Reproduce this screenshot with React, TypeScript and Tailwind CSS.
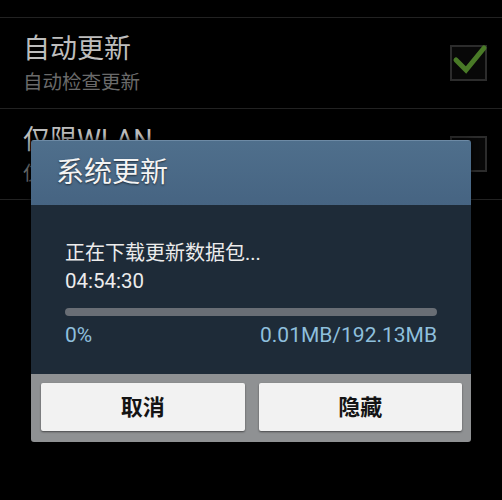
const FONT = "font-['Roboto','Noto_Sans_CJK_SC',sans-serif]";

const ROWS = [
  { title: "检查更新", sub: "检查更新", checked: false },
  { title: "自动更新", sub: "自动检查更新", checked: true },
  { title: "仅限WLAN", sub: "仅在WLAN下下载", checked: false },
];

function CheckBox({ checked }: { checked: boolean }) {
  return (
    <div className="relative h-[36px] w-[37px] border-2 border-[#2c2c2c] bg-[#080808]">
      {checked && (
        <svg
          className="absolute -right-[3px] -top-[4px]"
          width="38"
          height="34"
          viewBox="0 0 38 34"
          fill="none"
          stroke="#497a27"
          strokeWidth="5"
          strokeLinecap="round"
        >
          <path d="M6 17l10 10L34 5" />
        </svg>
      )}
    </div>
  );
}

export default function App() {
  return (
    <div className={`relative h-[500px] w-[502px] overflow-hidden bg-black ${FONT}`}>
      {/* settings list behind the dialog */}
      <div className="-mt-[73px] flex flex-col">
        {ROWS.map((row, i) => (
          <div
            key={i}
            className="flex h-[91px] items-center justify-between border-b border-[#222] pl-[23px] pr-[15px]"
          >
            <div className="flex flex-col">
              <span className="text-[27px] leading-[34px] text-[#bdbdbd]">{row.title}</span>
              <span className="mt-[6px] text-[19.5px] leading-[22px] text-[#6a6a6a]">{row.sub}</span>
            </div>
            <CheckBox checked={row.checked} />
          </div>
        ))}
      </div>

      {/* dialog */}
      <div className="absolute left-[31px] top-[140px] flex w-[440px] flex-col overflow-hidden rounded-[3px] shadow-[0_0_6px_rgba(0,0,0,0.8)]">
        <div className="flex h-[65px] items-center border-t border-[#6d8aa5] bg-gradient-to-b from-[#4f6f8c] to-[#466482] pl-[25px]">
          <span className="text-[28px] text-[#f4f4f4] [text-shadow:0_1px_2px_rgba(0,0,0,0.6)]">系统更新</span>
        </div>
        <div className="flex h-[169px] flex-col bg-[#1e2b38] px-[34px] pt-[34px]">
          <span className="text-[20px] leading-[28px] text-[#ececec]">正在下载更新数据包...</span>
          <span className="text-[20.5px] leading-[28px] text-[#ececec]">04:54:30</span>
          <div className="mt-[13px] h-[8px] w-full rounded-full bg-[#696e75]" />
          <div className="mt-[6px] flex justify-between text-[21px] leading-[26px] text-[#8ebfdc]">
            <span>0%</span>
            <span>0.01MB/192.13MB</span>
          </div>
        </div>
        <div className="flex gap-[14px] bg-[#8f9193] pb-[11px] pl-[10px] pr-[9px] pt-[9px]">
          <button className="h-[48px] flex-1 rounded-[2px] bg-[#f2f2f2] text-[22px] font-bold text-[#141414] shadow-[0_1px_2px_rgba(0,0,0,0.5)]">
            取消
          </button>
          <button className="h-[48px] flex-1 rounded-[2px] bg-[#f2f2f2] text-[22px] font-bold text-[#141414] shadow-[0_1px_2px_rgba(0,0,0,0.5)]">
            隐藏
          </button>
        </div>
      </div>
    </div>
  );
}
